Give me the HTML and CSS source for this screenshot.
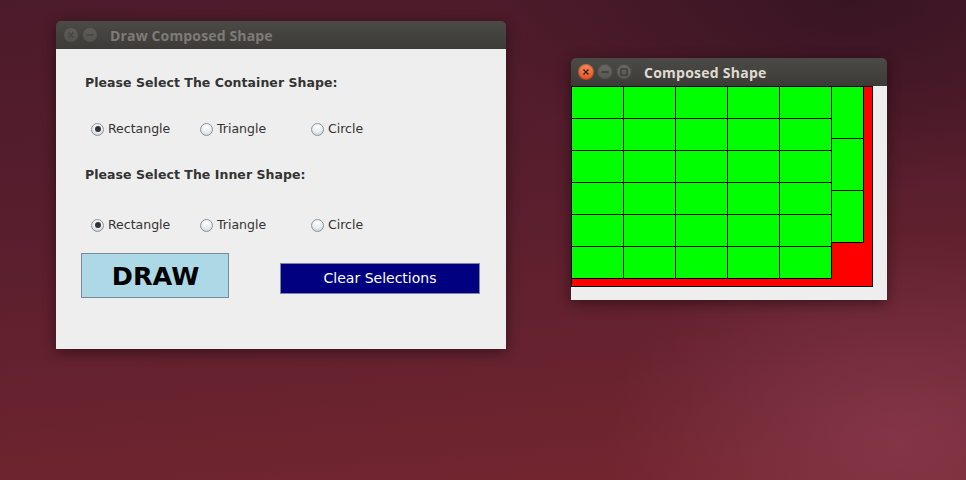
FILE: index.html
```html
<!DOCTYPE html>
<html>
<head>
<meta charset="utf-8">
<link rel="stylesheet" href="styles.css">
</head>
<body>
<div class="desktop">
  <div class="window win-main inactive">
    <div class="titlebar">
      <div class="wbtns">
        <span class="wbtn close"><svg width="16" height="16" viewBox="0 0 16 16"><path d="M5.5 5.5l5 5M10.5 5.5l-5 5" stroke="#44433f" stroke-width="1.2"/></svg></span>
        <span class="wbtn"><svg width="16" height="16" viewBox="0 0 16 16"><path d="M4.5 8h7" stroke="#44433f" stroke-width="1.4"/></svg></span>
      </div>
      <span class="title">Draw Composed Shape</span>
    </div>
    <div class="content form">
      <div class="label">Please Select The Container Shape:</div>
      <div class="radios">
        <label class="radio"><span class="dot checked"></span>Rectangle</label>
        <label class="radio"><span class="dot"></span>Triangle</label>
        <label class="radio"><span class="dot"></span>Circle</label>
      </div>
      <div class="label label-2">Please Select The Inner Shape:</div>
      <div class="radios radios-2">
        <label class="radio"><span class="dot checked"></span>Rectangle</label>
        <label class="radio"><span class="dot"></span>Triangle</label>
        <label class="radio"><span class="dot"></span>Circle</label>
      </div>
      <div class="actions">
        <button class="btn-draw">DRAW</button>
        <button class="btn-clear">Clear Selections</button>
      </div>
    </div>
  </div>

  <div class="window win-shape">
    <div class="titlebar">
      <div class="wbtns">
        <span class="wbtn close active-close"><svg width="16" height="16" viewBox="0 0 16 16"><path d="M5.5 5.5l5 5M10.5 5.5l-5 5" stroke="#3a1a10" stroke-width="1.2"/></svg></span>
        <span class="wbtn"><svg width="16" height="16" viewBox="0 0 16 16"><path d="M4.5 8h7" stroke="#3a3935" stroke-width="1.4"/></svg></span>
        <span class="wbtn"><svg width="16" height="16" viewBox="0 0 16 16"><rect x="5" y="5" width="6" height="6" fill="none" stroke="#3a3935" stroke-width="1.2"/></svg></span>
      </div>
      <span class="title">Composed Shape</span>
    </div>
    <div class="content canvas">
      <svg width="316" height="214" viewBox="0 0 316 214">
        <rect x="0.5" y="0.5" width="301" height="200" fill="#ff0000" stroke="#000" stroke-width="1"/>
        <g fill="#00ff00" stroke="#000" stroke-width="1">
          <rect x="0.5" y="0.5" width="52" height="32"/><rect x="52.5" y="0.5" width="52" height="32"/><rect x="104.5" y="0.5" width="52" height="32"/><rect x="156.5" y="0.5" width="52" height="32"/><rect x="208.5" y="0.5" width="52" height="32"/>
          <rect x="0.5" y="32.5" width="52" height="32"/><rect x="52.5" y="32.5" width="52" height="32"/><rect x="104.5" y="32.5" width="52" height="32"/><rect x="156.5" y="32.5" width="52" height="32"/><rect x="208.5" y="32.5" width="52" height="32"/>
          <rect x="0.5" y="64.5" width="52" height="32"/><rect x="52.5" y="64.5" width="52" height="32"/><rect x="104.5" y="64.5" width="52" height="32"/><rect x="156.5" y="64.5" width="52" height="32"/><rect x="208.5" y="64.5" width="52" height="32"/>
          <rect x="0.5" y="96.5" width="52" height="32"/><rect x="52.5" y="96.5" width="52" height="32"/><rect x="104.5" y="96.5" width="52" height="32"/><rect x="156.5" y="96.5" width="52" height="32"/><rect x="208.5" y="96.5" width="52" height="32"/>
          <rect x="0.5" y="128.5" width="52" height="32"/><rect x="52.5" y="128.5" width="52" height="32"/><rect x="104.5" y="128.5" width="52" height="32"/><rect x="156.5" y="128.5" width="52" height="32"/><rect x="208.5" y="128.5" width="52" height="32"/>
          <rect x="0.5" y="160.5" width="52" height="32"/><rect x="52.5" y="160.5" width="52" height="32"/><rect x="104.5" y="160.5" width="52" height="32"/><rect x="156.5" y="160.5" width="52" height="32"/><rect x="208.5" y="160.5" width="52" height="32"/>
          <rect x="260.5" y="0.5" width="32" height="52"/><rect x="260.5" y="52.5" width="32" height="52"/><rect x="260.5" y="104.5" width="32" height="52"/>
        </g>
      </svg>
    </div>
  </div>
</div>
</body>
</html>
```

FILE: styles.css
```css
html, body {
  margin: 0;
  padding: 0;
}
body {
  width: 966px;
  height: 480px;
  overflow: hidden;
}
.desktop {
  position: relative;
  width: 966px;
  height: 480px;
  background:
    radial-gradient(ellipse 420px 300px at 900px 440px, rgba(150, 70, 95, 0.5), rgba(150, 70, 95, 0) 70%),
    radial-gradient(ellipse 500px 260px at 850px 0px, rgba(40, 15, 28, 0.6), rgba(40, 15, 28, 0) 75%),
    linear-gradient(175deg, #4c1b2b 0%, #561d2d 35%, #66222f 70%, #75262f 100%);
  font-family: "DejaVu Sans", "Liberation Sans", sans-serif;
}

.window {
  position: absolute;
  box-shadow: 0 3px 14px rgba(0, 0, 0, 0.45);
  border-radius: 5px 5px 0 0;
}
.win-main {
  left: 56px;
  top: 21px;
  width: 450px;
}
.win-shape {
  left: 571px;
  top: 58px;
  width: 316px;
}

.titlebar {
  height: 28px;
  display: flex;
  align-items: center;
  background: linear-gradient(#4b4a46, #3c3b37);
  border-radius: 5px 5px 0 0;
  padding-left: 7px;
}
.wbtns {
  display: flex;
  gap: 3px;
}
.wbtn {
  width: 16px;
  height: 16px;
  border-radius: 50%;
  background: linear-gradient(#6a6965, #55544f);
  box-shadow: inset 0 0 0 1px rgba(0, 0, 0, 0.25);
  display: flex;
}
.win-main .wbtn {
  background: linear-gradient(#5e5d59, #52514d);
}
.active-close {
  background: linear-gradient(#f58a5a, #df5426);
}
.title {
  font-family: "Open Sans", "DejaVu Sans", sans-serif;
  font-weight: bold;
  font-size: 14px;
  color: #dfdbd2;
  letter-spacing: 0.25px;
}
.win-main .title {
  color: #7e7c76;
  margin-left: 12px;
  letter-spacing: 0.15px;
}
.win-shape .title {
  margin-left: 12px;
}

.content {
  background: #eeeeee;
}
.form {
  height: 300px;
  box-sizing: border-box;
  padding: 26px 0 0 29px;
  display: flex;
  flex-direction: column;
  align-items: flex-start;
}
.label {
  font-weight: bold;
  font-size: 12.5px;
  letter-spacing: 0.05px;
  line-height: 16px;
  color: #333333;
}
.label-2 {
  margin-top: 30px;
}
.radios {
  display: grid;
  grid-template-columns: 109px 111px auto;
  margin: 30px 0 0 6px;
}
.radios-2 {
  margin-top: 34px;
}
.radio {
  display: flex;
  align-items: center;
  font-size: 12.5px;
  line-height: 16px;
  color: #333333;
}
.dot {
  position: relative;
  width: 11px;
  height: 11px;
  border-radius: 50%;
  border: 1px solid #8e9398;
  background: radial-gradient(circle at 50% 30%, #ffffff 0%, #e8eef4 50%, #b9c7d6 100%);
  margin-right: 4px;
}
.dot.checked::after {
  content: "";
  position: absolute;
  left: 2.5px;
  top: 2.5px;
  width: 6px;
  height: 6px;
  border-radius: 50%;
  background: #333333;
}

.actions {
  display: flex;
  align-items: flex-start;
  margin: 20px 0 0 -4px;
}
.btn-draw {
  width: 148px;
  height: 45px;
  background: #add8e6;
  border: 1px solid #7a8a99;
  font-family: "DejaVu Sans", sans-serif;
  font-weight: bold;
  font-size: 25.5px;
  color: #000;
  padding: 0 0 0 1px;
}
.btn-clear {
  margin: 10px 0 0 51px;
  width: 200px;
  height: 31px;
  background: #000080;
  border: 1px solid #7a8a99;
  font-family: "DejaVu Sans", sans-serif;
  font-size: 14px;
  color: #ffffff;
  padding: 0 0 1px 0;
}

.canvas {
  height: 214px;
}
.canvas svg {
  display: block;
}
```
